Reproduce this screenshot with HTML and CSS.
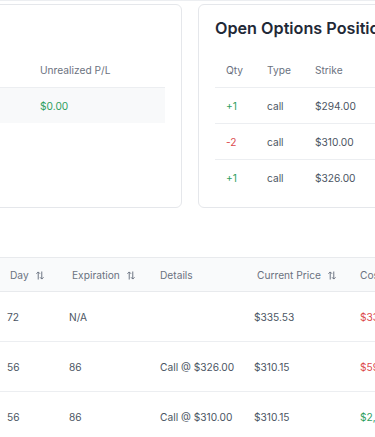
FILE: index.html
```html
<!DOCTYPE html>
<html lang="en">

<head>
  <meta charset="UTF-8">
  <meta name="viewport" content="width=device-width, initial-scale=1.0">
  <title>Positions</title>
  <link rel="stylesheet" href="styles.css">
</head>

<body>
  <div class="top-rule"></div>

  <div class="panels">
    <!-- Stock position card (left part is scrolled out of view) -->
    <div class="card stock-card">
      <h2 class="card-title">&nbsp;</h2>
      <table class="mini-table">
        <thead>
          <tr>
            <th class="spacer"></th>
            <th>Unrealized P/L</th>
          </tr>
        </thead>
        <tbody>
          <tr class="highlight">
            <td class="spacer"></td>
            <td class="gain">$0.00</td>
          </tr>
        </tbody>
      </table>
    </div>

    <!-- Open options card -->
    <div class="card options-card">
      <h2 class="card-title">Open Options Positions</h2>
      <table class="mini-table">
        <thead>
          <tr>
            <th class="col-qty">Qty</th>
            <th class="col-type">Type</th>
            <th>Strike</th>
          </tr>
        </thead>
        <tbody>
          <tr>
            <td class="gain">+1</td>
            <td>call</td>
            <td>$294.00</td>
          </tr>
          <tr>
            <td class="loss">-2</td>
            <td>call</td>
            <td>$310.00</td>
          </tr>
          <tr>
            <td class="gain">+1</td>
            <td>call</td>
            <td>$326.00</td>
          </tr>
        </tbody>
      </table>
    </div>
  </div>

  <!-- Trade history -->
  <table class="history">
    <thead>
      <tr>
        <th class="col-day sortable">Day <svg class="sort-icon" viewBox="0 0 9 10"><path d="M2.5 9.5V1M0.5 3l2-2 2 2M6.5 0.5V9M4.5 7l2 2 2-2" /></svg></th>
        <th class="col-exp sortable">Expiration <svg class="sort-icon" viewBox="0 0 9 10"><path d="M2.5 9.5V1M0.5 3l2-2 2 2M6.5 0.5V9M4.5 7l2 2 2-2" /></svg></th>
        <th class="col-details">Details</th>
        <th class="col-price sortable">Current Price <svg class="sort-icon" viewBox="0 0 9 10"><path d="M2.5 9.5V1M0.5 3l2-2 2 2M6.5 0.5V9M4.5 7l2 2 2-2" /></svg></th>
        <th class="col-cost">Cost</th>
      </tr>
    </thead>
    <tbody>
      <tr>
        <td>72</td>
        <td>N/A</td>
        <td></td>
        <td>$335.53</td>
        <td class="loss">$33,553.00</td>
      </tr>
      <tr>
        <td>56</td>
        <td>86</td>
        <td>Call @ $326.00</td>
        <td>$310.15</td>
        <td class="loss">$590.00</td>
      </tr>
      <tr>
        <td>56</td>
        <td>86</td>
        <td>Call @ $310.00</td>
        <td>$310.15</td>
        <td class="gain">$2,460.00</td>
      </tr>
    </tbody>
  </table>
</body>

</html>
```

FILE: styles.css
```css
/* General body styling */
body {
  font-family: Inter, "Noto Sans", sans-serif;
  font-size: 10.2px;
  color: #4b5563;
  margin: 0;
  padding: 0;
  background: #fff;
  overflow: hidden;
}

.top-rule {
  border-top: 1px solid #eceef1;
}

/* Summary cards row */
.panels {
  display: flex;
  gap: 16px;
  margin-top: 3px;
  margin-left: -118px;
}

.card {
  box-sizing: border-box;
  height: 204px;
  background: #fff;
  border: 1px solid #e5e7eb;
  border-radius: 6px;
  padding: 10px 16px;
  flex-shrink: 0;
}

.stock-card {
  width: 300px;
}

.options-card {
  width: 320px;
}

.card-title {
  margin: 0 0 12px;
  font-size: 16.2px;
  line-height: 26px;
  font-weight: 600;
  color: #1f2937;
  white-space: nowrap;
}

/* Small tables inside the cards */
.mini-table {
  width: 100%;
  border-collapse: collapse;
}

.mini-table th {
  text-align: left;
  font-weight: 400;
  color: #6b7280;
  height: 34px;
  padding: 0 11px;
  border-bottom: 1px solid #eceef1;
}

.mini-table td {
  height: 35px;
  padding: 0 11px;
  border-bottom: 1px solid #eceef1;
}

.mini-table tbody tr:last-child td {
  border-bottom: none;
}

.mini-table .spacer {
  width: 108px;
}

.mini-table .highlight td {
  background: #f8f9fa;
  height: 35px;
}

.col-qty {
  width: 19px;
}

.col-type {
  width: 26px;
}

.gain {
  color: #2fa05e;
}

.loss {
  color: #dc4a4d;
}

/* History table */
.history {
  margin-top: 49px;
  border-collapse: collapse;
  table-layout: fixed;
  width: 480px;
}

.history th,
.history td {
  box-sizing: border-box;
  white-space: nowrap;
  overflow: hidden;
}

.history th {
  text-align: left;
  font-weight: 400;
  color: #6b7280;
  background: #f9fafb;
  height: 34px;
  padding: 0 7px;
  border-top: 1px solid #e8eaed;
  border-bottom: 1px solid #e8eaed;
}

.history th.sortable {
  padding-left: 10px;
}

.history td {
  height: 50px;
  padding: 0 7px;
  border-bottom: 1px solid #eceef1;
}

.col-day {
  width: 62px;
}

.col-exp {
  width: 91px;
}

.col-details {
  width: 94px;
}

.col-price {
  width: 106px;
}

.sort-icon {
  width: 8px;
  height: 9px;
  margin-left: 4px;
  vertical-align: -1px;
  fill: none;
  stroke: #6b7280;
  stroke-width: 1.1;
}
```
